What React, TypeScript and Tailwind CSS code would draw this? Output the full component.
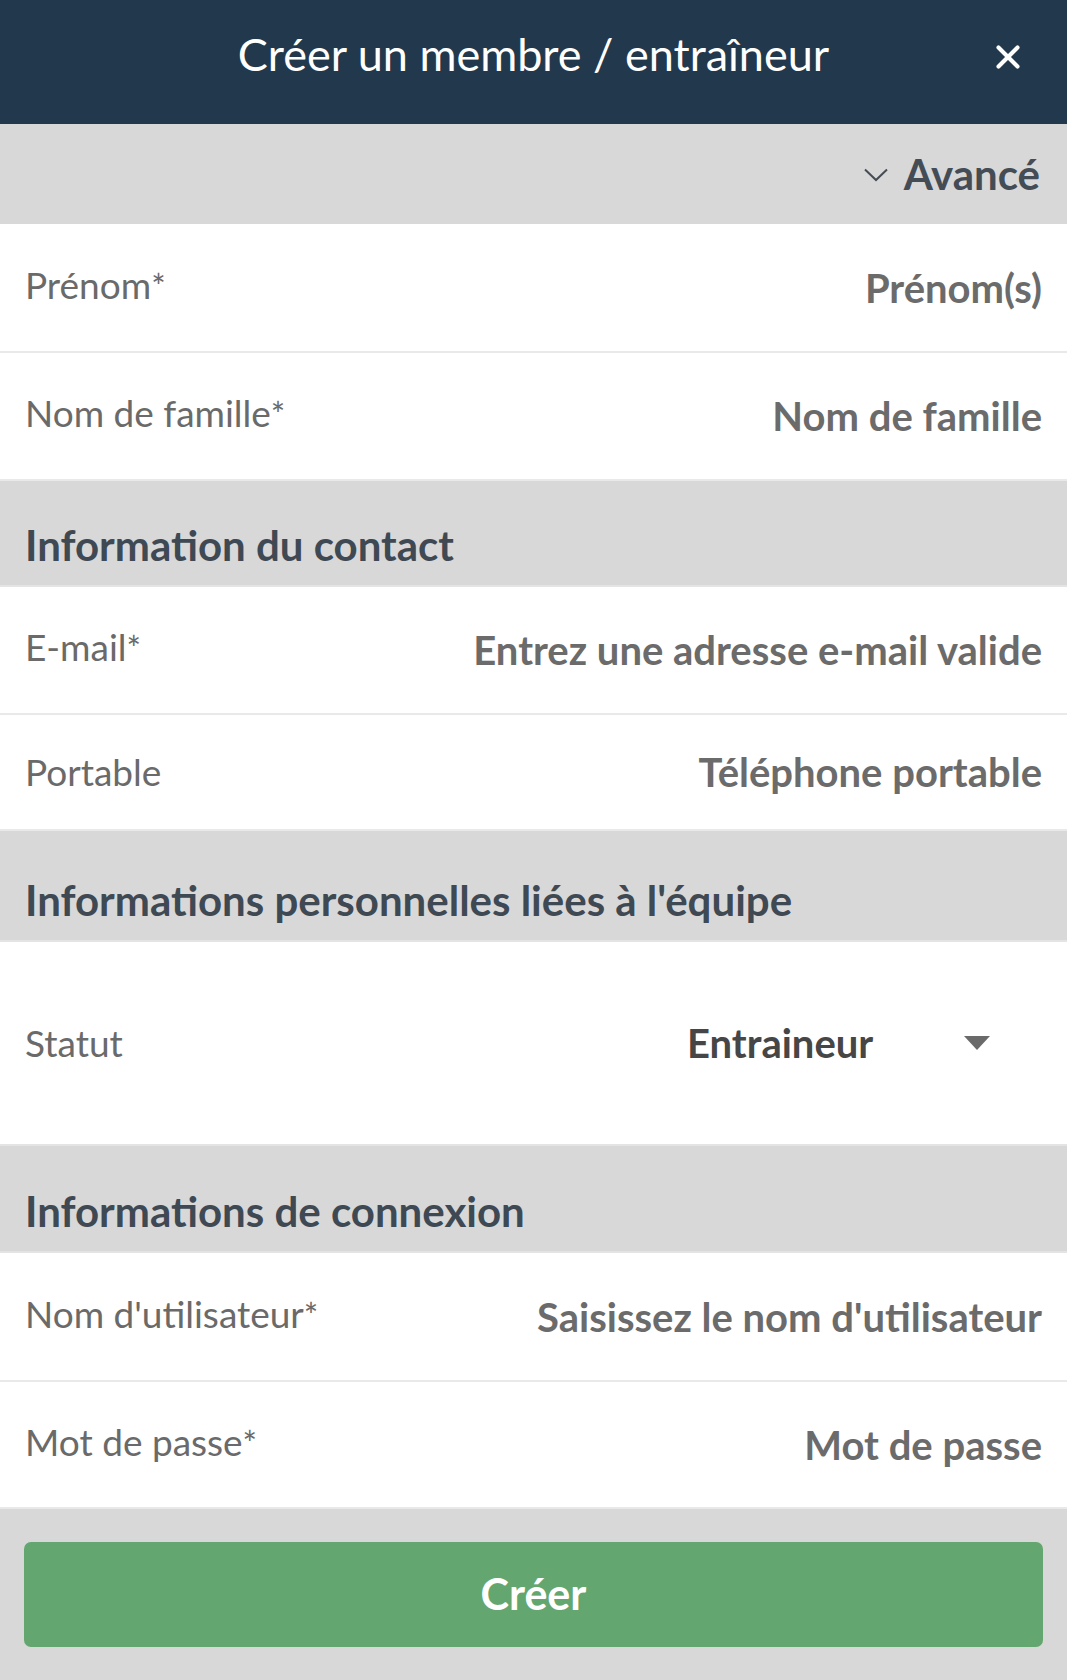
import { X } from "lucide-react";

type Field = { label: string; required?: boolean; placeholder: string; h: string };

function Row({ label, required, placeholder, h }: Field) {
  return (
    <div className={`flex items-center justify-between bg-white px-[25px] border-b-2 border-[#e9e9e9] ${h}`}>
      <span className={`text-[37px] text-[#6a6a6a] ${required ? "-mt-[6px]" : ""}`}>
        {label}
        {required && <span className="text-[34px]">*</span>}
      </span>
      <span className="text-[40px] font-bold text-[#6b6b6b]">{placeholder}</span>
    </div>
  );
}

function Section({ title, h }: { title: string; h: string }) {
  return (
    <div className={`flex items-end bg-[#d8d8d8] px-[25px] pb-[19px] border-b-2 border-[#e4e4e4] ${h}`}>
      <h2 className="text-[42px] font-bold text-[#3f4953] leading-none">{title}</h2>
    </div>
  );
}

export default function App() {
  return (
    <div className="w-[1067px] h-[1680px] bg-[#d8d8d8] font-['Lato','Liberation_Sans',sans-serif]">
      <header className="relative flex h-[124px] items-center justify-center bg-[#22384c]">
        <h1 className="text-[45px] text-white -mt-[14px]">Créer un membre / entraîneur</h1>
        <button className="absolute right-[40px] top-[38px] text-white">
          <X size={38} strokeWidth={2.6} />
        </button>
      </header>

      <div className="flex h-[100px] items-center justify-end gap-[16px] bg-[#d8d8d8] px-[27px] shadow-[0_2px_2px_rgba(0,0,0,0.06)]">
        <svg width="24" height="14" viewBox="0 0 24 14" className="mt-[2px]">
          <polyline points="1,1.5 12,12 23,1.5" fill="none" stroke="#444c55" strokeWidth="2" />
        </svg>
        <span className="text-[42px] font-bold text-[#444c55]">Avancé</span>
      </div>

      <Row label="Prénom" required placeholder="Prénom(s)" h="h-[129px]" />
      <Row label="Nom de famille" required placeholder="Nom de famille" h="h-[128px]" />

      <Section title="Information du contact" h="h-[106px]" />
      <Row label="E-mail" required placeholder="Entrez une adresse e-mail valide" h="h-[128px]" />
      <Row label="Portable" placeholder="Téléphone portable" h="h-[116px]" />

      <Section title="Informations personnelles liées à l'équipe" h="h-[111px]" />
      <div className="flex h-[204px] items-center justify-between bg-white px-[25px] border-b-2 border-[#e4e4e4]">
        <span className="text-[37px] text-[#6a6a6a]">Statut</span>
        <div className="flex w-[355px] items-center justify-between pr-[52px]">
          <span className="text-[40px] font-bold text-[#464646]">Entraineur</span>
          <svg width="26" height="14" viewBox="0 0 26 14">
            <path d="M0 0 L26 0 L13 14 Z" fill="#6a6a6a" />
          </svg>
        </div>
      </div>

      <Section title="Informations de connexion" h="h-[107px]" />
      <Row label="Nom d'utilisateur" required placeholder="Saisissez le nom d'utilisateur" h="h-[129px]" />
      <Row label="Mot de passe" required placeholder="Mot de passe" h="h-[127px]" />

      <div className="px-[24px] pt-[33px]">
        <button className="flex h-[105px] w-full items-center justify-center rounded-[7px] bg-[#64a66f] text-[43px] font-bold text-white">
          Créer
        </button>
      </div>
    </div>
  );
}
